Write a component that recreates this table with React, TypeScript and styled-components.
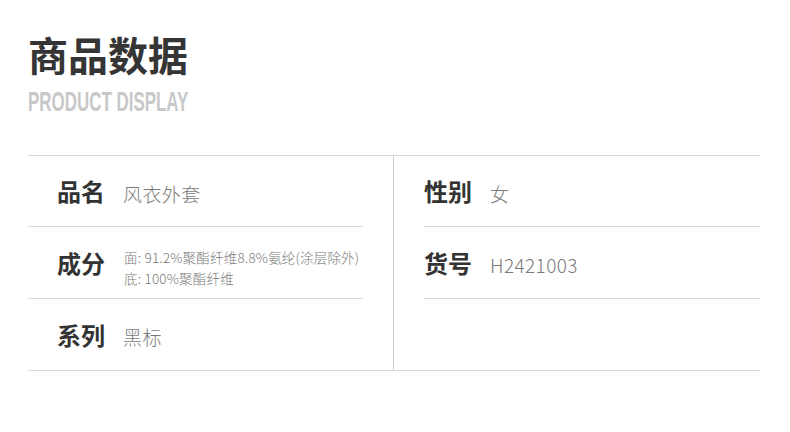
import React from "react";
import styled, { createGlobalStyle } from "styled-components";

const GlobalStyle = createGlobalStyle`
  html, body { margin: 0; padding: 0; background: #ffffff; }
  body { font-family: "Noto Sans CJK SC", "Noto Sans", sans-serif; }
`;

const Page = styled.div`
  width: 790px;
  height: 432px;
  box-sizing: border-box;
  padding: 28px 30px 0 28px;
  background: #fff;
`;

const Title = styled.h1`
  margin: 0;
  font-family: "Noto Sans CJK SC", sans-serif;
  font-size: 40px;
  line-height: 52px;
  font-weight: 700;
  color: #353535;
`;

const Subtitle = styled.div`
  margin-top: 8px;
  height: 28px;
  font-family: "Liberation Sans", Arial, sans-serif;
  font-weight: 700;
  font-size: 28px;
  line-height: 28px;
  color: #c8c8c8;
  white-space: nowrap;
  transform: scaleX(0.605);
  transform-origin: left center;
`;

const Table = styled.div`
  margin-top: 39px;
  display: grid;
  grid-template-columns: 365px 1fr;
  border-top: 1px solid #d8d8d8;
  border-bottom: 1px solid #d8d8d8;
`;

const Column = styled.div<{ $right?: boolean }>`
  display: flex;
  flex-direction: column;
  ${(p) =>
    p.$right
      ? `border-left: 1px solid #d0d0d0; padding-left: 30px;`
      : `padding-right: 30px;`}
`;

const Row = styled.div<{ $indent?: boolean }>`
  height: 70px;
  box-sizing: border-box;
  display: flex;
  align-items: center;
  padding-left: ${(p) => (p.$indent ? "29px" : "0")};
  & + & {
    height: 72px;
    border-top: 1px solid #d8d8d8;
  }
`;

const Label = styled.div`
  font-family: "Noto Sans CJK SC", sans-serif;
  font-weight: 700;
  font-size: 24px;
  color: #333;
  width: 66px;
  flex: none;
  line-height: 1;
`;

const Value = styled.div`
  font-family: "Noto Sans CJK SC", sans-serif;
  font-weight: 300;
  font-size: 19px;
  color: #7a7a7a;
  line-height: 1;
  padding-top: 4px;
  letter-spacing: 0.4px;
`;

const Small = styled.div`
  font-family: "Noto Sans CJK SC", sans-serif;
  font-weight: 300;
  font-size: 13.5px;
  line-height: 21px;
  letter-spacing: 0.2px;
  color: #7a7a7a;
  margin-left: 1px;
  padding-top: 10px;
`;

export default function App() {
  return (
    <>
      <GlobalStyle />
      <Page>
        <Title>商品数据</Title>
        <Subtitle>PRODUCT DISPLAY</Subtitle>
        <Table>
          <Column>
            <Row $indent>
              <Label>品名</Label>
              <Value>风衣外套</Value>
            </Row>
            <Row $indent>
              <Label>成分</Label>
              <Small>
                面: 91.2%聚酯纤维8.8%氨纶(涂层除外)
                <br />
                底: 100%聚酯纤维
              </Small>
            </Row>
            <Row $indent>
              <Label>系列</Label>
              <Value>黑标</Value>
            </Row>
          </Column>
          <Column $right>
            <Row>
              <Label>性别</Label>
              <Value>女</Value>
            </Row>
            <Row>
              <Label>货号</Label>
              <Value>H2421003</Value>
            </Row>
            <Row />
          </Column>
        </Table>
      </Page>
    </>
  );
}
